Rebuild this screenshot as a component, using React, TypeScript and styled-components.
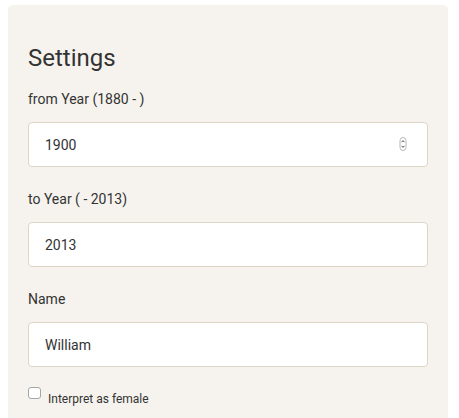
import { FC } from 'react';
import styled, { createGlobalStyle } from 'styled-components';

interface IField {
  id: string;
  label: string;
  value: string;
  spinner?: boolean;
}

const fields: IField[] = [
  { id: 'from', label: 'from Year (1880 - )', value: '1900', spinner: true },
  { id: 'to', label: 'to Year ( - 2013)', value: '2013' },
  { id: 'name', label: 'Name', value: 'William' },
];

const Spinner: FC = () => (
  <svg width="8" height="15" viewBox="0 0 8 15">
    <rect x="1" y="0.5" width="6" height="13" rx="3" fill="#fff" stroke="#b9b9b9" strokeWidth="1" />
    <path d="M2.6 5.2 L4 3.6 L5.4 5.2" fill="none" stroke="#555" strokeWidth="1" />
    <path d="M2.6 8.8 L4 10.4 L5.4 8.8" fill="none" stroke="#555" strokeWidth="1" />
  </svg>
);

const App: FC = () => {
  return (
    <Page>
      <GlobalStyle />
      <Panel>
        <Title>Settings</Title>

        {fields.map(field => (
          <Group key={field.id}>
            <Label htmlFor={field.id}>{field.label}</Label>
            <Field>
              <Input id={field.id} defaultValue={field.value} readOnly />
              {field.spinner && <Spinner />}
            </Field>
          </Group>
        ))}

        <CheckRow>
          <Checkbox type="checkbox" id="female" />
          <CheckLabel htmlFor="female">Interpret as female</CheckLabel>
        </CheckRow>
      </Panel>
    </Page>
  );
};

export default App;

const GlobalStyle = createGlobalStyle`
  html, body {
    margin: 0;
    background: #ffffff;
    font-family: Roboto, 'Liberation Sans', sans-serif;
    color: #333333;
  }
`;

const Page = styled.div`
  padding: 5px 11px 0 8px;
  height: 413px;
  overflow: hidden;
`;

const Panel = styled.div`
  width: 440px;
  box-sizing: border-box;
  min-height: 430px;
  padding: 39px 20px 0;
  background: #f6f3ee;
  border-radius: 5px;
`;

const Title = styled.h2`
  margin: 0 0 17px;
  font-size: 24px;
  line-height: 28px;
  font-weight: 400;
  color: #333333;
`;

const Group = styled.div`
  display: flex;
  flex-direction: column;
  margin-bottom: 22px;
`;

const Label = styled.label`
  font-size: 14px;
  line-height: 20px;
  margin-bottom: 13px;
  color: #333333;
`;

const Field = styled.div`
  height: 45px;
  box-sizing: border-box;
  display: flex;
  align-items: center;
  padding: 0 20px 0 16px;
  background: #ffffff;
  border: 1px solid #ddd5c6;
  border-radius: 4px;
`;

const Input = styled.input`
  flex: 1;
  min-width: 0;
  border: none;
  outline: none;
  padding: 0;
  background: transparent;
  font-family: Roboto, 'Liberation Sans', sans-serif;
  font-size: 14px;
  color: #333333;
`;

const CheckRow = styled.div`
  display: flex;
  align-items: flex-start;
  gap: 7px;
  margin-top: -2px;
`;

const Checkbox = styled.input`
  appearance: none;
  width: 13px;
  height: 12px;
  margin: 0;
  background: #ffffff;
  border: 1px solid #a6a6a6;
  border-radius: 3px;
`;

const CheckLabel = styled.label`
  font-size: 12px;
  line-height: 14px;
  margin-top: 5px;
  color: #333333;
`;
